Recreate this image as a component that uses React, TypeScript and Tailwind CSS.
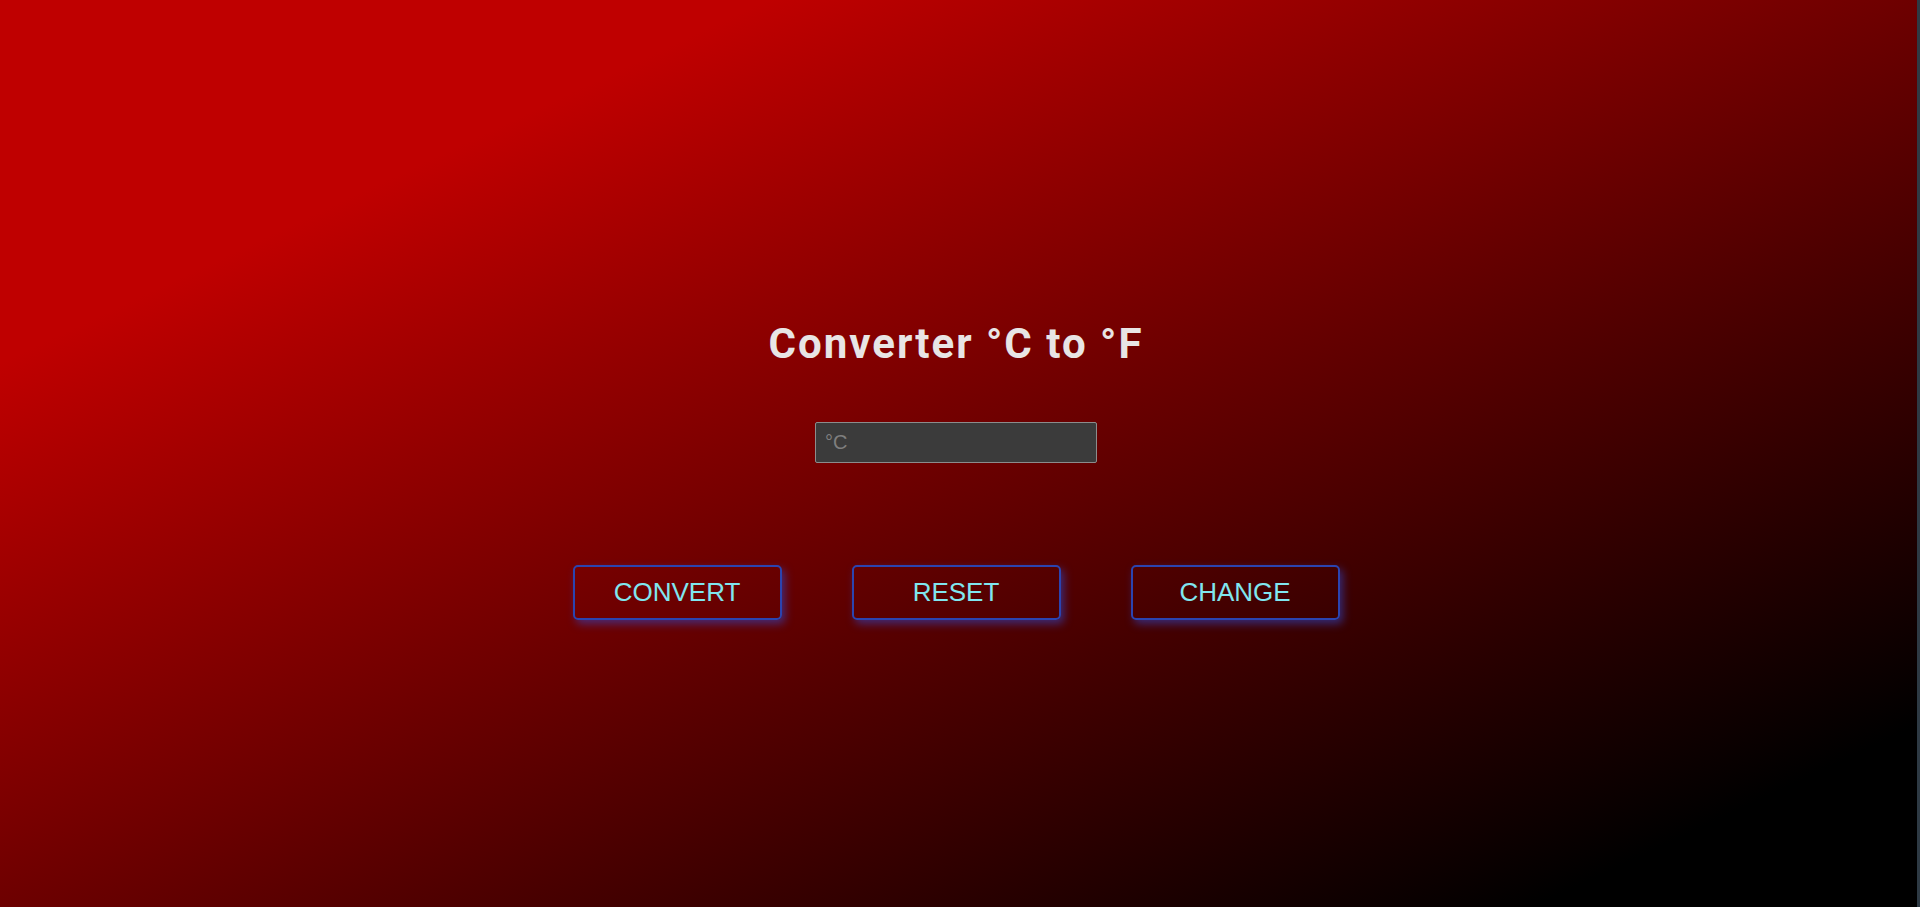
import React, { useState } from 'react';

const App: React.FC = () => {
    const [value, setValue] = useState('');
    const [toF, setToF] = useState(true);

    const handleConvert = () => {
        const n = parseFloat(value);
        if (isNaN(n)) return;
        setValue(String(toF ? (n * 9) / 5 + 32 : ((n - 32) * 5) / 9));
    };

    const buttons = [
        { label: 'CONVERT', onClick: handleConvert },
        { label: 'RESET', onClick: () => setValue('') },
        { label: 'CHANGE', onClick: () => setToF(!toF) },
    ];

    return (
        <div className="min-h-screen w-full flex border-r-[3px] border-[#2e3a44] bg-[linear-gradient(to_bottom_right,#bf0000_20%,#000000_90%)]">
            <div className="flex-1 flex flex-col items-center pt-[323px] pr-[5px]">
                <h1 className="text-[42px] leading-none font-bold tracking-[2px] text-[#e8e5e5] font-['Roboto',sans-serif]">
                    {toF ? 'Converter °C to °F' : 'Converter °F to °C'}
                </h1>

                <input
                    type="text"
                    value={value}
                    onChange={(e) => setValue(e.target.value)}
                    placeholder={toF ? '°C' : '°F'}
                    className="mt-[57px] w-[282px] h-[41px] px-[9px] bg-[#3b3b3b] border border-[#8c8c8c] rounded-[2px] text-[20px] text-[#d0d0d0] placeholder:text-[#7f7f7f] outline-none font-['Liberation_Sans',Arial,sans-serif]"
                />

                <div className="mt-[102px] flex gap-[70px]">
                    {buttons.map((b) => (
                        <button
                            key={b.label}
                            onClick={b.onClick}
                            className="w-[209px] h-[55px] border-2 border-[#2b44b0] rounded-[5px] bg-transparent text-[26px] text-[#80e6ef] shadow-[3px_4px_8px_rgba(45,75,210,0.55)] font-['Liberation_Sans',Arial,sans-serif] cursor-pointer"
                        >
                            {b.label}
                        </button>
                    ))}
                </div>
            </div>
        </div>
    );
};

export default App;
